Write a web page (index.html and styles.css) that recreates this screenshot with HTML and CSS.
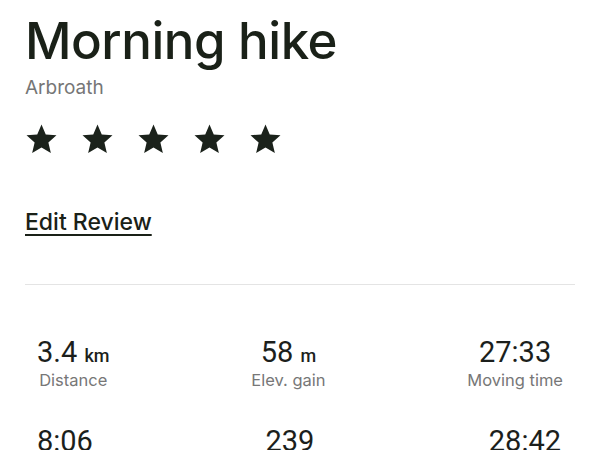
FILE: index.html
```html
<!DOCTYPE html>
<html lang="en">
<head>
    <meta charset="UTF-8">
    <meta name="viewport" content="width=device-width, initial-scale=1.0">
    <title>Morning hike</title>
    <link rel="stylesheet" href="styles.css">
</head>
<body>
    <div class="container">
        <h1 class="title">Morning hike</h1>
        <p class="place">Arbroath</p>

        <div class="stars">
            <svg class="star" viewBox="0 0 24 24"><path d="M12 1.8l3.1 7.2 7.8.7-5.9 5.2 1.8 7.6L12 18.5l-6.8 4 1.8-7.6-5.9-5.2 7.8-.7z"/></svg>
            <svg class="star" viewBox="0 0 24 24"><path d="M12 1.8l3.1 7.2 7.8.7-5.9 5.2 1.8 7.6L12 18.5l-6.8 4 1.8-7.6-5.9-5.2 7.8-.7z"/></svg>
            <svg class="star" viewBox="0 0 24 24"><path d="M12 1.8l3.1 7.2 7.8.7-5.9 5.2 1.8 7.6L12 18.5l-6.8 4 1.8-7.6-5.9-5.2 7.8-.7z"/></svg>
            <svg class="star" viewBox="0 0 24 24"><path d="M12 1.8l3.1 7.2 7.8.7-5.9 5.2 1.8 7.6L12 18.5l-6.8 4 1.8-7.6-5.9-5.2 7.8-.7z"/></svg>
            <svg class="star" viewBox="0 0 24 24"><path d="M12 1.8l3.1 7.2 7.8.7-5.9 5.2 1.8 7.6L12 18.5l-6.8 4 1.8-7.6-5.9-5.2 7.8-.7z"/></svg>
        </div>

        <a class="edit-link" href="#">Edit Review</a>

        <hr class="divider">

        <div class="stats">
            <div class="stat">
                <div class="value">3.4 <span class="unit">km</span></div>
                <div class="label">Distance</div>
            </div>
            <div class="stat">
                <div class="value">58 <span class="unit">m</span></div>
                <div class="label">Elev. gain</div>
            </div>
            <div class="stat">
                <div class="value">27:33</div>
                <div class="label">Moving time</div>
            </div>
        </div>

        <div class="stats">
            <div class="stat">
                <div class="value">8:06</div>
                <div class="label">Pace</div>
            </div>
            <div class="stat">
                <div class="value">239</div>
                <div class="label">Calories</div>
            </div>
            <div class="stat">
                <div class="value">28:42</div>
                <div class="label">Total time</div>
            </div>
        </div>
    </div>
</body>
</html>
```

FILE: styles.css
```css
body {
    margin: 0;
    background: #ffffff;
    font-family: Inter, "Noto Sans", sans-serif;
    color: #1a2118;
}
.container {
    padding: 10px 25px 0 25px;
}
.title {
    margin: 0;
    font-size: 51px;
    font-weight: 500;
    letter-spacing: -0.5px;
    line-height: 62px;
}
.place {
    margin: 4px 0 0 0;
    font-size: 19px;
    color: #767676;
    line-height: 24px;
}
.stars {
    display: flex;
    gap: 23px;
    margin-top: 22px;
}
.star {
    width: 33px;
    height: 33px;
    fill: #1b221b;
}
.edit-link {
    display: inline-block;
    margin-top: 53px;
    font-size: 23px;
    font-weight: 500;
    color: #1a2118;
    text-decoration: underline;
    text-decoration-thickness: 2px;
    text-underline-offset: 4px;
    line-height: 28px;
}
.divider {
    border: none;
    border-top: 1px solid #e4e4e4;
    margin: 48px 0 0 0;
}
.stats {
    display: flex;
    justify-content: space-between;
    padding: 0 12px;
    margin-top: 51px;
}
.stats + .stats {
    margin-top: 35px;
}
.stat {
    text-align: center;
}
.value {
    font-family: Roboto, Inter, sans-serif;
    font-size: 29px;
    color: #1c1f1c;
    line-height: 32px;
    height: 32px;
}
.unit {
    font-size: 18px;
    font-weight: 500;
    line-height: 1;
}
.label {
    margin-top: 2px;
    font-size: 16.5px;
    color: #777777;
    line-height: 20px;
}
```
